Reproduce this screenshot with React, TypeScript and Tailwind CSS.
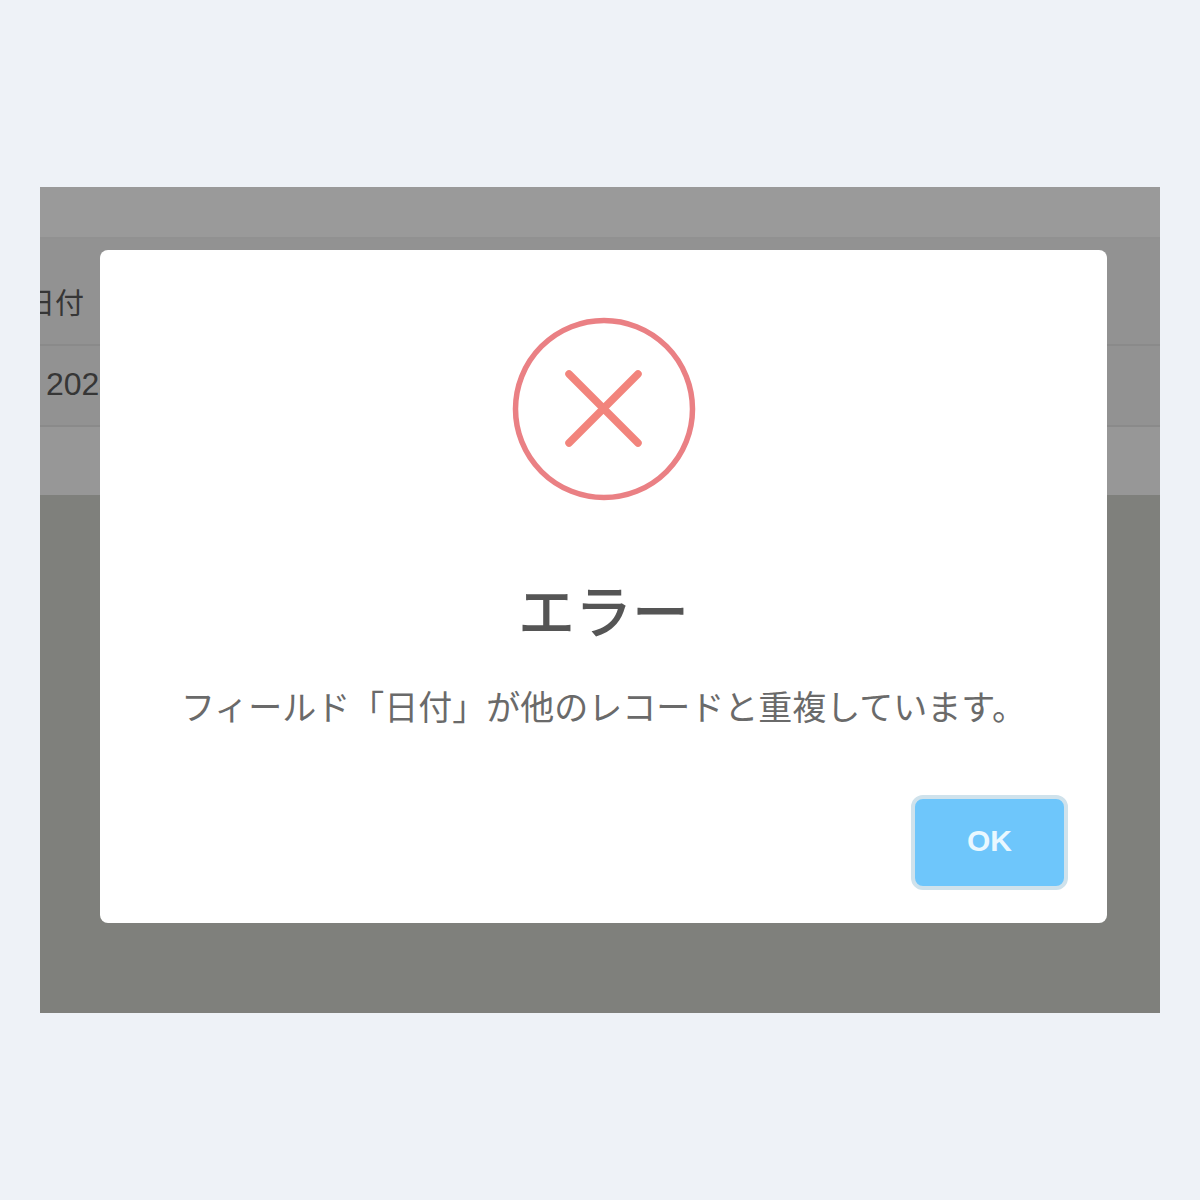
const jp = 'font-["Noto_Sans_CJK_JP","Noto_Sans",sans-serif]';

function ErrorIcon() {
  return (
    <svg width="184" height="184" viewBox="0 0 184 184" fill="none">
      <circle cx="92" cy="92" r="88.5" stroke="#ea8084" strokeWidth="5.5" />
      <path d="M57 57 L126 126 M126 57 L57 126" stroke="#f2847c" strokeWidth="7.5" strokeLinecap="round" />
    </svg>
  );
}

export default function App() {
  return (
    <div className={`flex h-[1200px] items-center justify-center bg-[#eef2f7] ${jp}`}>
      <div className="relative h-[826px] w-[1120px] overflow-hidden bg-[#7f807c]">
        <div className="h-[52px] border-b-2 border-[#919191] bg-[#9a9a9a]" />
        <div className="flex h-[107px] items-center overflow-hidden border-b-2 border-[#8a8a8a] bg-[#929292] pt-[21px] text-[29px] text-[#363636]">
          <span className="-ml-[14px]">日付</span>
        </div>
        <div className="flex h-[81px] items-center border-b-2 border-[#8a8a8a] bg-[#929292] pb-[4px] pl-[6px] font-['Liberation_Sans',sans-serif] text-[32px] text-[#363636]">
          2024
        </div>
        <div className="h-[68px] bg-[#979797]" />

        <div className="absolute left-[60px] top-[63px] flex h-[673px] w-[1007px] flex-col items-center rounded-[8px] bg-white pt-[67px]">
          <ErrorIcon />
          <h1 className="mt-[67px] text-[57px] leading-[80px] font-medium text-[#555555]">エラー</h1>
          <p className="mt-[35px] text-[34px] leading-[46px] text-[#6a6a6a]">フィールド「日付」が他のレコードと重複しています。</p>
          <div className="mt-[66px] flex w-full justify-end pr-[39px]">
            <button className="flex h-[95px] w-[157px] items-center justify-center rounded-[12px] border-[4px] border-[#cfe2ec] bg-[#6ec6fb] pb-[5px] font-['Liberation_Sans',sans-serif] text-[30px] font-bold text-[#e9f8ff]">
              OK
            </button>
          </div>
        </div>
      </div>
    </div>
  );
}
